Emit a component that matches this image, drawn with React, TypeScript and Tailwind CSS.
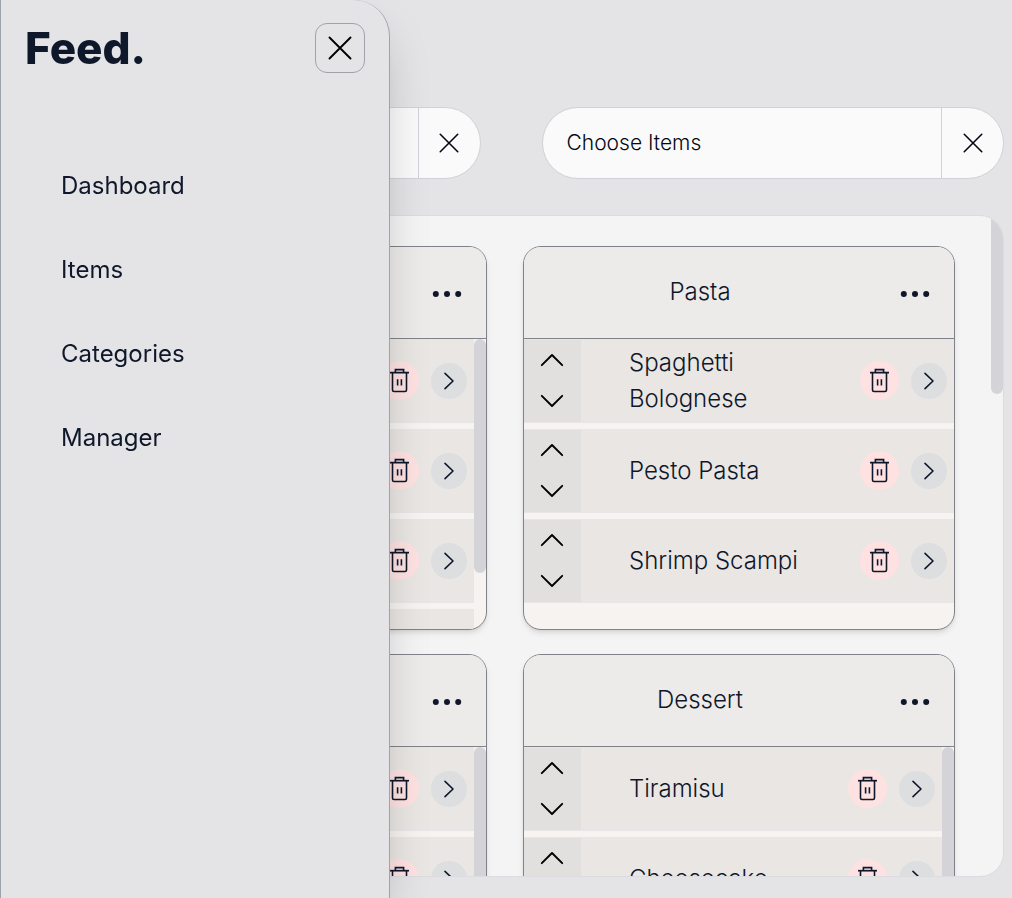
import React from "react";

type Category = { title: string; items: string[] };

const categories: Category[] = [
  { title: "Pizza", items: ["Margherita", "Pepperoni", "Hawaiian", "Veggie"] },
  { title: "Pasta", items: ["Spaghetti Bolognese", "Pesto Pasta", "Shrimp Scampi"] },
  { title: "Salad", items: ["Caesar Salad", "Greek Salad", "Caprese", "Cobb"] },
  { title: "Dessert", items: ["Tiramisu", "Cheesecake", "Panna Cotta", "Gelato"] },
];

const links = ["Dashboard", "Items", "Categories", "Manager"];

function CrossIcon({ className }: { className: string }) {
  return (
    <svg viewBox="0 0 24 24" fill="none" stroke="currentColor" strokeWidth="1.9" strokeLinecap="round" className={className} aria-hidden="true">
      <path d="M1.5 1.5 22.5 22.5M22.5 1.5 1.5 22.5" />
    </svg>
  );
}

function CaretIcon({ d }: { d: string }) {
  return (
    <svg viewBox="0 0 24 14" fill="none" stroke="currentColor" strokeWidth="1.9" strokeLinecap="round" strokeLinejoin="round" className="h-3.5 w-6" aria-hidden="true">
      <path d={d} />
    </svg>
  );
}

function TrashIcon() {
  return (
    <svg viewBox="0 0 25 25" fill="none" stroke="currentColor" strokeWidth="1.6" className="size-[25px]" aria-hidden="true">
      <path d="M3 4.7H22" strokeWidth="1.7" />
      <path d="M8.4 4.5V1.6H16.6V4.5" />
      <path d="M5.5 5V22Q5.5 23.5 7 23.5H18Q19.5 23.5 19.5 22V5" />
      <path d="M10.6 11.2V17.6M14.4 11.2V17.6" />
    </svg>
  );
}

function Picker({ label }: { label: string }) {
  return (
    <div className="flex h-18 overflow-hidden rounded-full border border-[#d1d1d8] bg-[#fafafa] text-gray-950">
      <button type="button" className="min-w-0 flex-1 truncate pl-6 text-left text-[21px] font-light">
        {label}
      </button>
      <button type="button" aria-label={`Clear ${label}`} className="flex w-[62px] items-center justify-center border-l border-[#d1d1d8]">
        <CrossIcon className="size-5" />
      </button>
    </div>
  );
}

function ItemRow({ name }: { name: string }) {
  return (
    <li className="flex h-21 shrink-0 items-center border-y border-[#e6e6e8] bg-[#e9e6e3] pr-[7px]">
      <div className="flex h-full w-[57px] shrink-0 flex-col items-center justify-between bg-[#e1e0de] pt-[13px] pr-px pb-3.5 text-black">
        <button type="button" aria-label={`Move ${name} up`}>
          <CaretIcon d="M1.8 12.2 12 2 22.2 12.2" />
        </button>
        <button type="button" aria-label={`Move ${name} down`}>
          <CaretIcon d="M1.8 1.8 12 12 22.2 1.8" />
        </button>
      </div>
      <span className="min-w-0 flex-1 pr-3 pl-12 text-2xl leading-9 font-light">{name}</span>
      <div className="flex h-10 items-center gap-3">
        <button type="button" aria-label={`Delete ${name}`} className="flex size-[39px] items-center justify-center self-start rounded-full bg-[#fee2e2]">
          <TrashIcon />
        </button>
        <button type="button" aria-label={`Open ${name}`} className="flex size-9 items-center justify-center rounded-full bg-[#dddee0]">
          <svg viewBox="0 0 12 18" fill="none" stroke="currentColor" strokeWidth="1.6" strokeLinecap="round" strokeLinejoin="round" className="h-[18px] w-3" aria-hidden="true">
            <path d="M2 1.3 10 9 2 16.7" />
          </svg>
        </button>
      </div>
    </li>
  );
}

function CategoryCard({ title, items }: Category) {
  return (
    <section className="flex h-96 flex-col overflow-hidden rounded-[18px] border border-[#808389] bg-[#f7f3f0] shadow-md">
      <header className="flex h-23 shrink-0 items-center border-b border-[#808389] bg-[#ecebe9] pb-0.5">
        <h2 className="flex-1 text-center text-2xl font-light">{title}</h2>
        <button type="button" aria-label={`${title} options`} className="flex w-[78px] justify-center pt-1">
          <svg viewBox="0 0 30 8" fill="currentColor" className="h-2 w-[30px]" aria-hidden="true">
            <circle cx="3.8" cy="4" r="3" />
            <circle cx="15" cy="4" r="3" />
            <circle cx="26.2" cy="4" r="3" />
          </svg>
        </button>
      </header>
      <div className="flex min-h-0 flex-1">
        <ul className="flex min-w-0 flex-1 flex-col gap-1.5 overflow-y-auto [scrollbar-width:none]">
          {items.map((name) => (
            <ItemRow key={name} name={name} />
          ))}
        </ul>
        {items.length > 3 && (
          <div className="w-3 shrink-0">
            <div className="h-[234px] rounded-full bg-[#d4d4d8]" />
          </div>
        )}
      </div>
    </section>
  );
}

function Sidebar() {
  return (
    <aside className="fixed inset-y-0 left-0 w-[390px] rounded-tr-[36px] border-x border-[#9ca3af] bg-[#e4e4e6] shadow-2xl">
      <div className="flex items-center justify-between px-6 pt-[23px]">
        <span className="text-[44px] leading-[50px] font-extrabold">Feed.</span>
        <button type="button" aria-label="Close menu" className="flex size-[50px] items-center justify-center rounded-xl border border-[#a1a1aa] text-black">
          <CrossIcon className="size-6" />
        </button>
      </div>
      <nav className="flex flex-col gap-12 px-15 pt-[95px]">
        {links.map((label) => (
          <a key={label} href={`#${label.toLowerCase()}`} className="text-2xl leading-9">
            {label}
          </a>
        ))}
      </nav>
    </aside>
  );
}

export default function App() {
  return (
    <div className="flex h-screen flex-col bg-[#e4e4e6] pt-[107px] pr-2 pb-[21px] pl-4.5 font-['Inter',sans-serif] text-slate-900">
      <div className="grid shrink-0 grid-cols-2 gap-[61px]">
        <Picker label="Choose Categories" />
        <Picker label="Choose Items" />
      </div>
      <main className="mt-9 flex min-h-0 flex-1 overflow-hidden rounded-3xl border border-[#dcdce0] bg-[#f4f4f4]">
        <div className="grid min-w-0 flex-1 grid-cols-2 content-start gap-x-9 gap-y-6 overflow-y-auto px-9 py-[30px] [scrollbar-width:none]">
          {categories.map((category) => (
            <CategoryCard key={category.title} {...category} />
          ))}
        </div>
        <div className="w-3 shrink-0">
          <div className="h-[178px] rounded-b-full bg-[#d4d4d8]" />
        </div>
      </main>
      <Sidebar />
    </div>
  );
}
